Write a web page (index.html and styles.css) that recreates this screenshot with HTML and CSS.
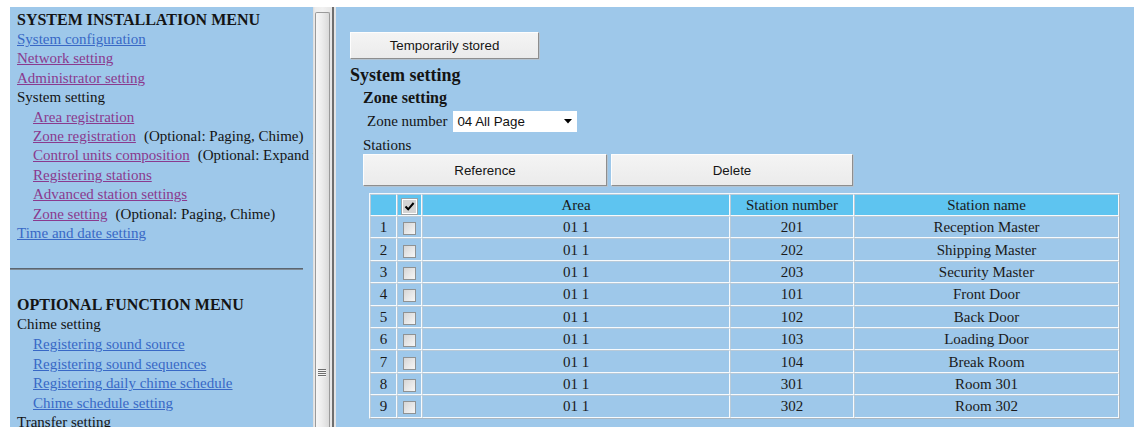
FILE: index.html
```html
<!DOCTYPE html>
<html lang="en">
<head>
<meta charset="utf-8">
<title>System setting - Zone setting</title>
<link rel="stylesheet" href="styles.css">
</head>
<body>
<div class="window">
  <nav class="menu">
    <div class="menu-title">SYSTEM INSTALLATION MENU</div>
    <a class="item fresh" href="#">System configuration</a>
    <a class="item visited" href="#">Network setting</a>
    <a class="item visited" href="#">Administrator setting</a>
    <div class="item">System setting</div>
    <div class="item sub"><a class="visited" href="#">Area registration</a></div>
    <div class="item sub"><a class="visited" href="#">Zone registration</a><span class="note">(Optional: Paging, Chime)</span></div>
    <div class="item sub"><a class="visited" href="#">Control units composition</a><span class="note">(Optional: Expand units)</span></div>
    <div class="item sub"><a class="visited" href="#">Registering stations</a></div>
    <div class="item sub"><a class="visited" href="#">Advanced station settings</a></div>
    <div class="item sub"><a class="visited" href="#">Zone setting</a><span class="note">(Optional: Paging, Chime)</span></div>
    <a class="item fresh" href="#">Time and date setting</a>
    <div class="rule"></div>
    <div class="menu-title">OPTIONAL FUNCTION MENU</div>
    <div class="group">
      <div class="item">Chime setting</div>
      <div class="item sub"><a class="fresh" href="#">Registering sound source</a></div>
      <div class="item sub"><a class="fresh" href="#">Registering sound sequences</a></div>
      <div class="item sub"><a class="fresh" href="#">Registering daily chime schedule</a></div>
      <div class="item sub"><a class="fresh" href="#">Chime schedule setting</a></div>
      <div class="item">Transfer setting</div>
    </div>
  </nav>
  <div class="scroll">
    <div class="thumb"><div class="grip"></div></div>
  </div>
  <div class="frame-border"></div>
  <main class="content">
    <button class="btn btn-temp" type="button">Temporarily stored</button>
    <h2 class="page-title">System setting</h2>
    <section class="zone">
      <h3 class="zone-title">Zone setting</h3>
      <div class="zone-row">
        <span class="zone-label">Zone number</span>
        <div class="select">
          <span>04 All Page</span>
          <svg class="arrow" width="8" height="5" viewBox="0 0 8 5"><path d="M0 0H8L4 4.5Z" fill="#000"/></svg>
        </div>
      </div>
      <div class="stations-label">Stations</div>
      <div class="btn-row">
        <button class="btn btn-ref" type="button">Reference</button>
        <button class="btn btn-del" type="button">Delete</button>
      </div>
      <table class="stations">
        <colgroup>
          <col class="c-num"><col class="c-chk"><col class="c-area"><col class="c-no"><col class="c-name">
        </colgroup>
        <thead>
          <tr>
            <th></th>
            <th><span class="cb-all"><svg width="13" height="13" viewBox="0 0 13 13"><path d="M2.5 6.5L5.2 9.3L10.6 3" fill="none" stroke="#000" stroke-width="2"/></svg></span></th>
            <th>Area</th>
            <th>Station number</th>
            <th>Station name</th>
          </tr>
        </thead>
        <tbody>
          <tr><td>1</td><td><span class="cb"></span></td><td>01 1</td><td>201</td><td>Reception Master</td></tr>
          <tr><td>2</td><td><span class="cb"></span></td><td>01 1</td><td>202</td><td>Shipping Master</td></tr>
          <tr><td>3</td><td><span class="cb"></span></td><td>01 1</td><td>203</td><td>Security Master</td></tr>
          <tr><td>4</td><td><span class="cb"></span></td><td>01 1</td><td>101</td><td>Front Door</td></tr>
          <tr><td>5</td><td><span class="cb"></span></td><td>01 1</td><td>102</td><td>Back Door</td></tr>
          <tr><td>6</td><td><span class="cb"></span></td><td>01 1</td><td>103</td><td>Loading Door</td></tr>
          <tr><td>7</td><td><span class="cb"></span></td><td>01 1</td><td>104</td><td>Break Room</td></tr>
          <tr><td>8</td><td><span class="cb"></span></td><td>01 1</td><td>301</td><td>Room 301</td></tr>
          <tr><td>9</td><td><span class="cb"></span></td><td>01 1</td><td>302</td><td>Room 302</td></tr>
        </tbody>
      </table>
    </section>
  </main>
</div>
</body>
</html>
```

FILE: styles.css
```css
html, body {
  margin: 0;
  height: 435px;
  overflow: hidden;
  background: #ffffff;
}

body {
  font-family: "Liberation Serif", "Times New Roman", serif;
  color: #141414;
}

.window {
  display: flex;
  height: 435px;
  box-sizing: border-box;
  padding: 7px 7px 8px 10px;
}

/* ---------- left menu frame ---------- */
.menu {
  flex: none;
  width: 303px;
  box-sizing: border-box;
  background: #9ec8ea;
  overflow: hidden;
  white-space: nowrap;
  padding: 3px 0 0 7px;
  font-size: 15px;
  line-height: 19.4px;
}

.menu-title {
  font-weight: bold;
  font-size: 16px;
  line-height: 20px;
}

.item {
  display: block;
}

.sub {
  padding-left: 16px;
}

.note {
  margin-left: 8px;
}

a {
  text-decoration: underline;
}

.fresh {
  color: #3868c6;
}

.visited {
  color: #8a3a8e;
}

.rule {
  margin: 25px 0 25px -7px;
  width: 293px;
  height: 0;
  border-top: 1px solid #5b6570;
  border-bottom: 1px solid #7d8a96;
}

.group {
  line-height: 19.6px;
}

/* ---------- scrollbar & frame border ---------- */
.scroll {
  flex: none;
  width: 19px;
  display: flex;
  flex-direction: column;
  background: linear-gradient(to right, #dcdcdc 0, #ececec 2px, #f1f1f1 50%, #e6e6e6 100%);
}

.thumb {
  flex: 1;
  margin: 5px 2px 0 2px;
  border: 1px solid #9a9a9a;
  border-bottom: none;
  border-radius: 2px 2px 0 0;
  background: linear-gradient(to right, #f7f7f7 0, #ededed 45%, #dadada 100%);
  padding-top: 356px;
}

.grip {
  width: 8px;
  height: 8px;
  margin-left: 2px;
  background: repeating-linear-gradient(to bottom, #6e6e6e 0 1px, #f4f4f4 1px 2px);
}

.frame-border {
  flex: none;
  width: 4px;
  background: linear-gradient(to right, #6e6e6e 0 2px, #e4e4e4 2px 4px);
}

/* ---------- right content frame ---------- */
.content {
  flex: 1;
  background: #9ec8ea;
  padding: 25px 0 0 14px;
  font-size: 15px;
}

.btn {
  display: block;
  padding: 0;
  margin: 0;
  font-family: "Liberation Sans", Arial, sans-serif;
  font-size: 13.33px;
  color: #151515;
  background: linear-gradient(#f4f4f4, #ebebeb);
  border: 1px solid;
  border-color: #fdfdfd #8e8e8e #8e8e8e #fdfdfd;
  box-shadow: 1px 1px 0 #b3c3d1;
}

.btn-temp {
  width: 189px;
  height: 27px;
}

.page-title {
  margin: 5px 0 0 0;
  font-size: 18px;
  line-height: 22px;
  font-weight: bold;
}

.zone {
  margin-left: 13px;
}

.zone-title {
  margin: 1px 0 0 0;
  font-size: 16px;
  line-height: 22px;
  font-weight: bold;
}

.zone-row {
  display: flex;
  align-items: center;
  height: 23px;
  margin-top: 1px;
  padding-left: 4px;
}

.zone-label {
  margin-right: 6px;
}

.select {
  display: flex;
  align-items: center;
  justify-content: space-between;
  width: 124px;
  height: 21px;
  box-sizing: border-box;
  padding: 0 5px 0 4px;
  background: #ffffff;
  font-family: "Liberation Sans", Arial, sans-serif;
  font-size: 13.33px;
  color: #111;
}

.stations-label {
  margin-top: 3px;
  line-height: 18px;
}

.btn-row {
  display: flex;
  gap: 4px;
}

.btn-ref {
  width: 244px;
  height: 32px;
}

.btn-del {
  width: 242px;
  height: 32px;
}

/* ---------- table ---------- */
.stations {
  margin: 7px 0 0 6px;
  width: 751px;
  table-layout: fixed;
  border-collapse: separate;
  border-spacing: 0;
  border: 1px solid;
  border-color: #f3f8fc #a9b6c1 #a9b6c1 #f3f8fc;
  font-size: 15px;
  color: #1a1a1a;
}

.c-num { width: 27px; }
.c-chk { width: 25px; }
.c-area { width: 308px; }
.c-no { width: 124px; }
.c-name { width: 265px; }

.stations th,
.stations td {
  padding: 0;
  text-align: center;
  font-weight: normal;
  border: 1px solid;
  border-color: #b9cad8 #f6fafd #f6fafd #b9cad8;
  line-height: 18px;
}

.stations thead tr {
  height: 22px;
}

.stations tbody tr {
  height: 22.4px;
}

.stations th {
  background: #5ec4f0;
}

.cb {
  display: inline-block;
  width: 11px;
  height: 11px;
  vertical-align: middle;
  border: 1px solid #8f9293;
  background: linear-gradient(135deg, #d6d6d6, #f6f6f6);
}

.cb-all {
  display: inline-block;
  width: 13px;
  height: 13px;
  vertical-align: middle;
  border: 1px solid #ffffff;
  outline: 1px solid #9aa3a8;
  background: #d4d4d4;
}

.cb-all svg {
  display: block;
}
```
